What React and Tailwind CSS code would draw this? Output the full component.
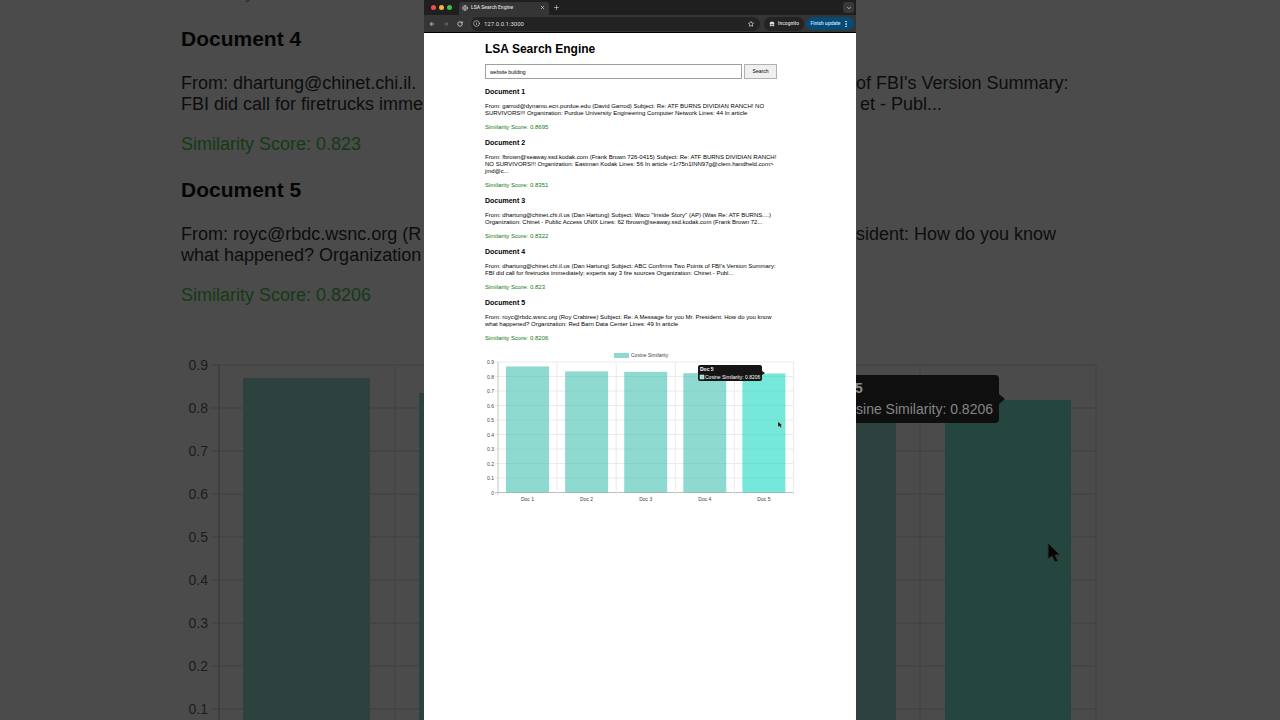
import React from 'react';
import { ArrowLeft, ArrowRight, RotateCw, Info, Star, X, Plus, ChevronDown, MoreVertical, Globe } from 'lucide-react';
import { RiSpyFill } from 'react-icons/ri';

const documents = [
    {
        title: 'Document 1',
        text: 'From: garrod@dynamo.ecn.purdue.edu (David Garrod) Subject: Re: ATF BURNS DIVIDIAN RANCH! NO\nSURVIVORS!!! Organization: Purdue University Engineering Computer Network Lines: 44 In article',
        score: 0.8695,
    },
    {
        title: 'Document 2',
        text: 'From: fbrown@seaway.ssd.kodak.com (Frank Brown 726-0415) Subject: Re: ATF BURNS DIVIDIAN RANCH!\nNO SURVIVORS!!! Organization: Eastman Kodak Lines: 56 In article <1r75n1INN97g@clem.handheld.com>\njmd@c...',
        score: 0.8351,
    },
    {
        title: 'Document 3',
        text: 'From: dhartung@chinet.chi.il.us (Dan Hartung) Subject: Waco "Inside Story" (AP) (Was Re: ATF BURNS....)\nOrganization: Chinet - Public Access UNIX Lines: 62 fbrown@seaway.ssd.kodak.com (Frank Brown 72...',
        score: 0.8322,
    },
    {
        title: 'Document 4',
        text: "From: dhartung@chinet.chi.il.us (Dan Hartung) Subject: ABC Confirms Two Points of FBI's Version Summary:\nFBI did call for firetrucks immediately; experts say 3 fire sources Organization: Chinet - Publ...",
        score: 0.823,
    },
    {
        title: 'Document 5',
        text: 'From: royc@rbdc.wsnc.org (Roy Crabtree) Subject: Re: A Message for you Mr. President: How do you know\nwhat happened? Organization: Red Barn Data Center Lines: 49 In article',
        score: 0.8206,
    },
];

const ticks = [0, 0.1, 0.2, 0.3, 0.4, 0.5, 0.6, 0.7, 0.8, 0.9];
const edges = [0, 1, 2, 3, 4, 5];

// Enlarged, dimmed copy of the page on the left of the frame
function LeftBackdrop() {
    const y = (value) => 402 - value * 430;

    return (
        <div className="flex-1 min-w-0 overflow-hidden bg-[#4b4b4b] text-[#0d0d0d] text-[18px] leading-[21px]">
            <div className="-mt-[18px] pl-[181px] whitespace-pre">
                <p className="text-[#153a14]">Similarity Score: 0.8322</p>
                <h3 className="mt-6 text-[21px] leading-6 font-bold text-[#050505]">Document 4</h3>
                <p className="mt-[22px]">{'From: dhartung@chinet.chi.il.\nFBI did call for firetrucks imme'}</p>
                <p className="mt-[19px] text-[#153a14]">Similarity Score: 0.823</p>
                <h3 className="mt-[23px] text-[21px] leading-6 font-bold text-[#050505]">Document 5</h3>
                <p className="mt-[22px]">{'From: royc@rbdc.wsnc.org (R\nwhat happened? Organization'}</p>
                <p className="mt-[19px] text-[#153a14]">Similarity Score: 0.8206</p>
            </div>
            <svg viewBox="0 0 424 370" className="mt-11 block w-full" aria-hidden="true">
                {ticks.slice(1).map((tick) => (
                    <g key={tick}>
                        <line x1="211" x2="424" y1={y(tick)} y2={y(tick)} stroke="#454545" strokeWidth="2" />
                        <text x="208" y={y(tick) + 5} textAnchor="end" fill="#1c1c1c" className="text-[14px]">{tick}</text>
                    </g>
                ))}
                <line x1="395" x2="395" y1="15" y2="370" stroke="#454545" strokeWidth="2" />
                <line x1="219" x2="219" y1="15" y2="370" stroke="#3f3f3f" strokeWidth="2" />
                <rect x="243" y="28" width="127" height="342" fill="#2d413e" />
                <rect x="419" y="43" width="5" height="327" fill="#2d413e" />
            </svg>
        </div>
    );
}

function RightBackdrop() {
    const y = (value) => 402 - value * 430;

    return (
        <div className="flex-1 min-w-0 overflow-hidden bg-[#4b4b4b] text-[#0d0d0d] text-[18px] leading-[21px]">
            <div className="pt-[73px] whitespace-nowrap">
                <p>of FBI's Version Summary:</p>
                <p className="pl-1">et - Publ...</p>
                <p className="mt-[109px]">sident: How do you know</p>
            </div>
            <svg viewBox="0 0 424 370" className="mt-[105px] block w-full" aria-hidden="true">
                {ticks.slice(1).map((tick) => (
                    <line key={tick} x1="0" x2="241" y1={y(tick)} y2={y(tick)} stroke="#454545" strokeWidth="2" />
                ))}
                <line x1="64" x2="64" y1="15" y2="370" stroke="#454545" strokeWidth="2" />
                <line x1="240" x2="240" y1="15" y2="370" stroke="#454545" strokeWidth="2" />
                <rect x="0" y="49" width="40" height="321" fill="#2d413e" />
                <rect x="89" y="50" width="126" height="320" fill="#24463f" />
                <path d="M0 25 H139 Q143 25 143 29 V44 L149 49 L143 54 V69 Q143 73 139 73 H0 Z" fill="#0f0f0f" />
                <text x="-1" y="43" fill="#8a8a8a" className="text-[14px] font-bold">5</text>
                <text x="137" y="64" textAnchor="end" fill="#858585" className="text-[14px]">sine Similarity: 0.8206</text>
                <path d="M192 193 V209 L196 206 L199 212 L202 211 L199 205 H204 Z" fill="#060606" stroke="#333" strokeWidth="1" />
            </svg>
        </div>
    );
}

function BrowserBar() {
    return (
        <header className="bg-[#1f1f1f] text-[#dedede] font-[Roboto,sans-serif] text-[5px] leading-[7px] border-b border-black">
            <div className="flex h-[15px] items-end pr-[2px]">
                <div className="flex gap-[3px] self-center pl-[7px]">
                    <span className="size-[5px] rounded-full bg-[#ee4f52]" />
                    <span className="size-[5px] rounded-full bg-[#f0b43c]" />
                    <span className="size-[5px] rounded-full bg-[#35c84a]" />
                </div>
                <div className="ml-[7px] flex h-[13px] w-[90px] items-center rounded-t-[3px] bg-[#353535] pb-[2px] pl-[3px] pr-1">
                    <Globe className="size-[6px]" />
                    <span className="ml-[3px] flex-1 font-medium">LSA Search Engine</span>
                    <button aria-label="Close tab"><X className="size-[5px]" strokeWidth={3} /></button>
                </div>
                <button aria-label="New tab" className="ml-1 self-center"><Plus className="size-[7px]" /></button>
                <button aria-label="Search tabs" className="ml-auto flex size-[11px] items-center justify-center self-center rounded-[3px] bg-[#383838]">
                    <ChevronDown className="size-[6px]" strokeWidth={3} />
                </button>
            </div>
            <div className="flex h-[17px] items-center bg-[#353535] pl-1 pr-[2px]">
                <button aria-label="Back" className="px-px"><ArrowLeft className="size-[6px]" strokeWidth={3} /></button>
                <button aria-label="Forward" className="ml-[7px] text-[#777]"><ArrowRight className="size-[6px]" strokeWidth={3} /></button>
                <button aria-label="Reload" className="ml-2"><RotateCw className="size-[6px]" strokeWidth={3} /></button>
                <div className="ml-2 flex h-[14px] flex-1 items-center rounded-full bg-[#232323] px-[2px]">
                    <Info className="size-[7px] shrink-0" />
                    <input
                        aria-label="Address"
                        defaultValue="127.0.0.1:3000"
                        className="ml-1 min-w-0 flex-1 bg-transparent text-[6px] leading-[8px] outline-none"
                    />
                    <button aria-label="Bookmark" className="mr-1"><Star className="size-[6px]" strokeWidth={3} /></button>
                </div>
                <div className="ml-1 flex h-[14px] w-10 items-center justify-center gap-[3px] rounded-full bg-[#232323]">
                    <RiSpyFill className="size-[6px]" />
                    <span className="font-medium">Incognito</span>
                </div>
                <button className="ml-[2px] flex h-[13px] w-12 items-center justify-center gap-px rounded-full bg-[#084a76] text-[#c6e6fb]">
                    <span className="font-medium">Finish update</span>
                    <MoreVertical className="size-[8px]" strokeWidth={3} />
                </button>
            </div>
        </header>
    );
}

function SimilarityChart() {
    const y = (value) => 147.5 - value * 145;

    return (
        <svg viewBox="0 0 309 160" className="mt-[3px] block w-full text-[5px]" role="img" aria-label="Cosine Similarity">
            <rect x="129" y="8" width="15" height="5" fill="#8edad1" />
            <text x="146" y="12" fill="#444">Cosine Similarity</text>

            {ticks.map((tick) => (
                <g key={tick}>
                    <line x1="10" x2="309" y1={y(tick)} y2={y(tick)} stroke={tick ? '#ebebeb' : '#bdbdbd'} />
                    <text x="9" y={y(tick) + 2} textAnchor="end" fill="#444">{tick}</text>
                </g>
            ))}
            {edges.map((edge) => (
                <line
                    key={edge}
                    x1={13 + edge * 59.1}
                    x2={13 + edge * 59.1}
                    y1="17"
                    y2="150"
                    stroke={edge ? '#ebebeb' : '#c4c4c4'}
                />
            ))}

            {documents.map((doc, i) => (
                <g key={doc.title}>
                    <rect
                        x={21 + i * 59.1}
                        y={y(doc.score)}
                        width="43"
                        height={doc.score * 145}
                        fill={i === 4 ? 'rgba(27,217,192,0.6)' : 'rgba(67,193,178,0.6)'}
                    />
                    <text x={42.5 + i * 59.1} y="156" textAnchor="middle" fill="#444">Doc {i + 1}</text>
                </g>
            ))}

            {/* Tooltip of the hovered bar */}
            <path d="M215 20 H275 Q277 20 277 22 V26 L280 28 L277 30 V34 Q277 36 275 36 H215 Q213 36 213 34 V22 Q213 20 215 20 Z" fill="#151515" />
            <text x="215" y="26" fill="#fff" className="font-bold">Doc 5</text>
            <rect x="215" y="30" width="4" height="4" fill="#8edad1" stroke="#fff" strokeWidth="0.5" />
            <text x="220" y="34" fill="#fff">Cosine Similarity: 0.8206</text>

            <path d="M293 76.5 V82 L294.5 81 L295.6 83 L296.6 82.5 L295.7 80.6 H297.4 Z" fill="#111" stroke="#fff" strokeWidth="0.3" />
        </svg>
    );
}

export default function App() {
    return (
        <div className="flex min-h-screen overflow-hidden font-['Liberation_Sans',Arial,sans-serif]">
            <LeftBackdrop />

            <div className="w-[432px] max-w-full shrink-0 bg-white text-black">
                <BrowserBar />
                <main className="pl-[61px] pr-[62px] pt-[9px] text-[6px] leading-[7px]">
                    <h1 className="text-[12px] leading-[14px] font-bold">LSA Search Engine</h1>
                    <form className="mt-2 flex gap-[2px]" onSubmit={(e) => e.preventDefault()}>
                        <input
                            aria-label="Search query"
                            defaultValue="website building"
                            className="h-[15px] w-[257px] border border-[#a0a0a0] px-1 text-[5px] outline-none"
                        />
                        <button type="submit" className="h-[15px] w-[33px] border border-[#b0b0b0] bg-[#efefef] text-[5px]">
                            Search
                        </button>
                    </form>

                    <div className="mt-2 flex flex-col gap-[7px]">
                        {documents.map((doc) => (
                            <article key={doc.title}>
                                <h3 className="text-[7px] leading-[9px] font-bold">{doc.title}</h3>
                                <p className="mt-[7px] whitespace-pre-line">{doc.text}</p>
                                <p className="mt-[7px] text-[#107a10]">Similarity Score: {doc.score}</p>
                            </article>
                        ))}
                    </div>

                    <SimilarityChart />
                </main>
            </div>

            <RightBackdrop />
        </div>
    );
}
